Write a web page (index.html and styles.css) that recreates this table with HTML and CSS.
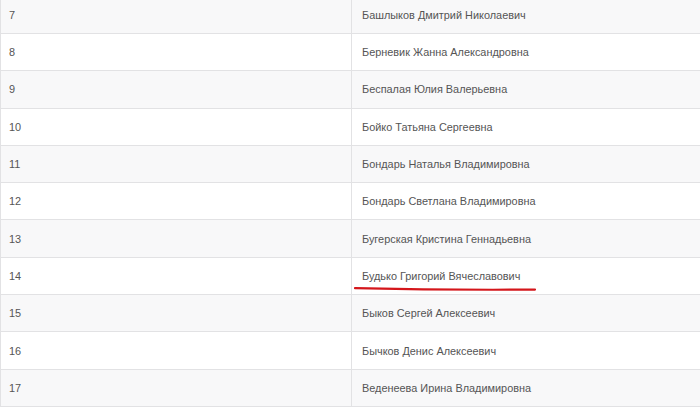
FILE: index.html
```html
<!DOCTYPE html>
<html lang="ru">
<head>
    <meta charset="UTF-8">
    <meta name="viewport" content="width=device-width, initial-scale=1.0">
    <title>Список</title>
    <link rel="stylesheet" href="styles.css">
</head>
<body>
    <table class="list">
        <tr><td class="num">7</td><td>Башлыков Дмитрий Николаевич</td></tr>
        <tr><td class="num">8</td><td>Берневик Жанна Александровна</td></tr>
        <tr><td class="num">9</td><td>Беспалая Юлия Валерьевна</td></tr>
        <tr><td class="num">10</td><td>Бойко Татьяна Сергеевна</td></tr>
        <tr><td class="num">11</td><td>Бондарь Наталья Владимировна</td></tr>
        <tr><td class="num">12</td><td>Бондарь Светлана Владимировна</td></tr>
        <tr><td class="num">13</td><td>Бугерская Кристина Геннадьевна</td></tr>
        <tr><td class="num">14</td><td><span class="marked">Будько Григорий Вячеславович
            <svg class="underline" width="184" height="6" viewBox="0 0 184 6">
                <path d="M2 2.2 Q 90 4.2 182 3.6" stroke="#d4161b" stroke-width="2.2" fill="none" stroke-linecap="round"/>
            </svg></span></td></tr>
        <tr><td class="num">15</td><td>Быков Сергей Алексеевич</td></tr>
        <tr><td class="num">16</td><td>Бычков Денис Алексеевич</td></tr>
        <tr><td class="num">17</td><td>Веденеева Ирина Владимировна</td></tr>
    </table>
</body>
</html>
```

FILE: styles.css
```css
body {
    margin: 0;
    background: #fff;
    font-family: 'Liberation Sans', Arial, sans-serif;
    overflow: hidden;
}

.list {
    border-collapse: collapse;
    width: 704px;
    margin-top: -4.3px;
    font-size: 10.9px;
    color: #555;
}

.list td {
    height: 36.3px;
    padding: 0 10px;
    border: 1px solid #e2e2e4;
    vertical-align: middle;
}

.list td.num {
    width: 332px;
    padding-left: 8px;
}

.list tr:nth-child(odd) {
    background: #f8f8f9;
}

.marked {
    position: relative;
    display: inline-block;
}

.underline {
    position: absolute;
    left: -9px;
    top: 16px;
}
```
